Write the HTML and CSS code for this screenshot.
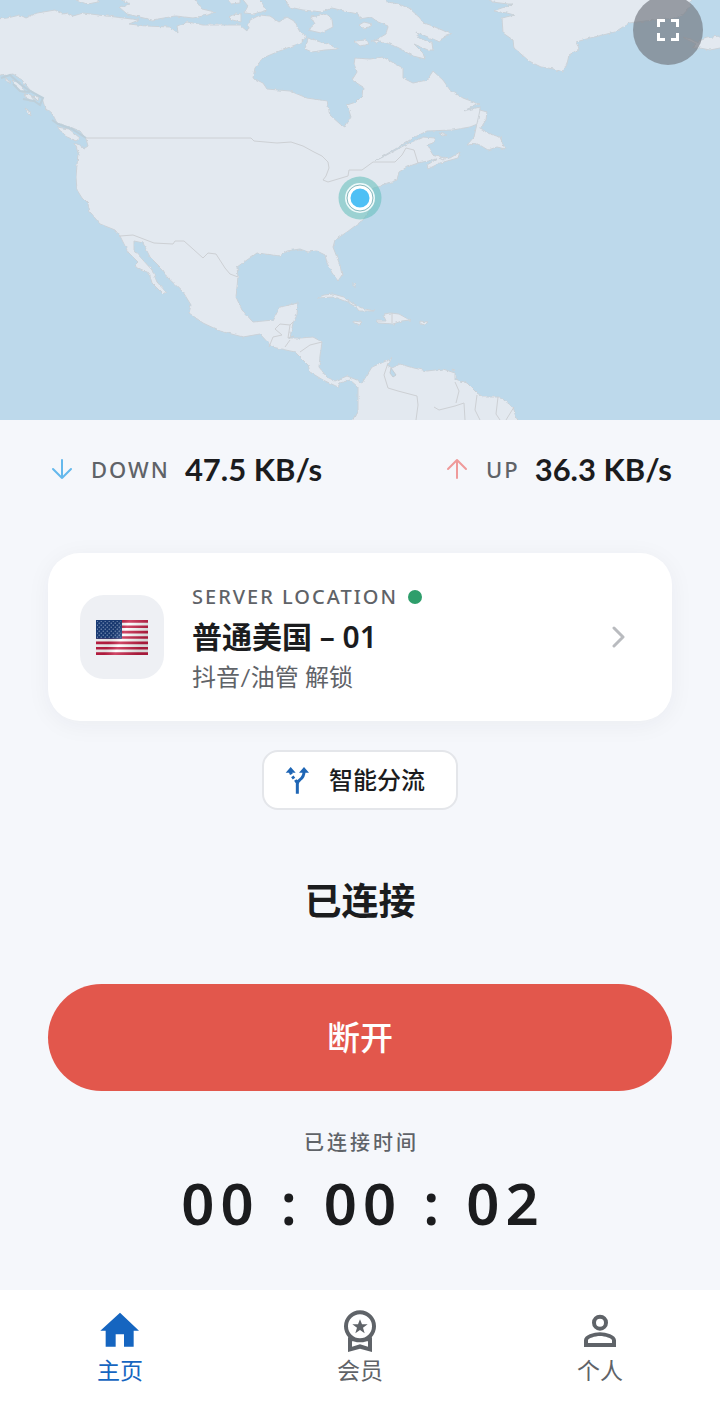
FILE: index.html
```html
<!DOCTYPE html>
<html lang="zh-CN">
<head>
<meta charset="utf-8">
<meta name="viewport" content="width=device-width, initial-scale=1">
<title>已连接</title>
<link rel="stylesheet" href="styles.css">
</head>
<body>
<section class="map">
<svg class="map-art" viewBox="0 0 720 420" preserveAspectRatio="xMidYMin slice" aria-hidden="true">
<defs><filter id="coast" x="0" y="0" width="100%" height="100%"><feTurbulence type="fractalNoise" baseFrequency="0.22" numOctaves="2" seed="4"/><feDisplacementMap in="SourceGraphic" scale="3" xChannelSelector="R" yChannelSelector="G"/></filter></defs>
<rect width="720" height="420" fill="#bdd9eb"/>
<g class="land" filter="url(#coast)">
<path d="M-5 19 7 18 20 15 26 18 37 13 55 10 62 14 68 13 73 16 83 13 107 16 124 18 139 20 129 24 147 26 170 27 178 33 177 26 187 22 203 25 240 25 247 31 250 20 260 15 270 16 279 22 287 17 294 21 300 32 307 37 298 44 290 47 277 52 263 58 255 68 253 78 263 83 267 89 290 91 307 98 327 101 330 115 340 124 345 127 351 117 347 105 356 102 362 96 363 87 352 80 357 72 354 64 355 58 370 59 383 57 392 62 403 68 403 78 413 83 427 80 433 71 443 80 450 90 463 98 479 104 463 111 480 107 480 123 470 127 453 130 427 131 413 138 397 148 375 161 383 157 407 144 423 137 435 138 433 143 427 145 433 155 440 157 450 158 460 152 458 158 440 163 428 169 427 165 437 159 418 163 407 167 399 172 397 180 383 185 372 189 374 204 363 220 347 232 335 240 333 247 340 265 342 275 338 281 332 273 327 263 325 255 317 251 308 252 300 249 287 251 280 256 257 253 247 260 237 267 238 277 236 297 242 310 253 322 273 320 280 307 298 303 297 315 293 323 290 338 300 338 313 337 322 342 320 357 319 367 327 377 335 381 347 376 357 380 362 383 372 367 393 358 387 365 392 368 400 364 410 367 427 371 443 369 455 373 455 379 467 383 477 393 483 397 500 397 513 407 519 425 350 425 358 410 358 387 350 380 340 383 338 387 323 380 310 372 308 365 300 357 295 352 272 347 260 334 243 337 220 331 203 323 189 313 191 305 183 292 167 277 163 270 150 257 143 243 134 241 134 250 143 260 152 270 157 282 166 292 163 294 152 283 149 273 134 266 138 262 128 252 120 236 115 230 100 224 90 212 88 204 82 198 77 190 76 177 78 153 75 143 85 148 88 146 86 139 80 131 70 127 57 123 53 115 45 108 42 98 30 90 22 80 13 74-5 77z"/>
<path d="M76 0 88 4 98 2 98-4H76zM113-4 130 4 119 7 127 14 152 20 176 16 193 18 208 15 215 12 202 9 195 0 193-4zM225-4 231 4 240 3V-4zM229 17 236 13 241 14 241 22 232 20zM240-4 248 6 244 13 254 14 267 10 262 3 255-4zM283-4 289 7 303 10 322 12 332 8 348 12 358 14 360 19 371 17 378 22 388 26 386 34 376 40 390 44 402 50 413 56 425 59 423 53 414 44 428 50 433 50 432 43 419 38 416 32 440 42 443 37 451 34 442 30 430 25 424 23 419 17 409 8 398 4 388 2 378-4zM311 17 325 14 332 19 333 27 321 33 308 30 315 24zM308 38 325 43 339 49 325 50 312 52 305 49zM359 25 364 22 372 24 370 27 362 28zM354 41 366 40 369 44 360 46zM371 41 380 40 377 44z"/>
<path d="M488-4 492 2 508 4 513 4 493 11 507 13 514 15 502 18 503 33 513 40 514 48 529 61 541 67 554 69 563 72 567 64 569 55 579 49 576 42 590 38 603 35 615 32 629 23 645 21 676 18 684 14 690 5 693-4zM480 110 487 112 486 120 480 129 490 134 500 137 505 149 497 147 488 150 478 144 467 145 474 137zM682 37 691 39 696 42 707 38 725 35V47L710 50 700 48 692 48 696 44z"/>
<path d="M57 127 69 129 80 138 76 141 65 136zM25 108 30 111 31 116 27 112zM12 80 20 83 26 93 19 91zM24 94 31 95 36 101 29 101zM3 77 11 82 7 82zM33 96 39 97 38 101z"/>
<path d="M317 298 324 295 333 294 344 297 352 303 365 309 375 311 359 311 356 307 347 302 334 297zM353 321 362 322 359 325 354 323zM376 321 386 321 383 314 391 313 399 314 410 320 402 321 393 324 378 323zM420 321 428 322 425 325 420 324zM353 283 356 286 353 286zM452 369 455 370 453 371zM439 158 447 157 443 160zM439 133 447 135 442 136z"/>
</g>
<g class="borders">
<path d="M86 138H251L254 141 277 143 291 142 303 146 314 152 322 156 328 162 329 168 326 176 323 180 328 182 348 176 349 170 362 170 373 162 395 162 402 155 406 148 414 150 418 163"/>
<path d="M120 236 133 235 154 243 173 244 175 241 184 241 193 249 203 258 208 253 216 254 225 268 230 274 238 277M269 347 273 337 282 335 275 329 280 324 290 325 288 338 294 336M285 347 290 340M300 352 310 345 322 342M290 325 293 322M388 363 384 375 388 388 398 391 417 396 418 405 416 420M434 407 439 410 455 406 464 403 465 420M455 382 459 391 456 403M477 395 475 410 480 420M498 397 496 414 500 420M514 407 506 420M392 313 392 323"/>
</g>
<path class="water" d="M391 368 396 375 393 377 390 373z"/>
<path class="inlets" d="M1 78 10 75 20 84 30 91 43 98 40 105 34 101 23 99M13 84 20 91 30 92M52 120 58 124 72 129 86 138"/>
<g><circle cx="360" cy="198" r="21.500" fill="#5ebdb8" opacity=".54"/><circle cx="360" cy="198" r="15" fill="#eefafa"/><circle cx="360" cy="198" r="11" fill="#4fc0f5" stroke="#fff" stroke-width="3"/><circle cx="360" cy="198" r="13" fill="none" stroke="#6ba6ad" stroke-width=".8"/></g>
</svg>
<button class="expand" type="button" aria-label="全屏"><svg viewBox="0 0 22 22" width="22" height="22"><path d="M1.500 8V1.500H8M14 1.500h6.500V8M20.500 14v6.500H14M8 20.500H1.500V14" fill="none" stroke="#fff" stroke-width="3"/></svg></button>
</section>
<main class="content">
<div class="stats">
<div class="stat"><svg class="arrow down" viewBox="0 0 28 28" aria-hidden="true"><path d="M14 5v18M5 14l9 9 9-9"/></svg><span class="stat-label">DOWN</span><strong class="stat-value">47.5 KB/s</strong></div>
<div class="stat"><svg class="arrow up" viewBox="0 0 28 28" aria-hidden="true"><path d="M14 23V5M5 14l9-9 9 9"/></svg><span class="stat-label">UP</span><strong class="stat-value">36.3 KB/s</strong></div>
</div>
<button class="server" type="button">
<span class="flag-box"><svg viewBox="0 0 52 35" width="52" height="35" aria-hidden="true">
<defs><linearGradient id="fold" x2="1" y2=".3"><stop offset="0" stop-color="#000" stop-opacity=".06"/><stop offset=".4" stop-color="#000" stop-opacity=".12"/><stop offset=".6" stop-color="#fff" stop-opacity=".18"/><stop offset="1" stop-color="#000" stop-opacity=".16"/></linearGradient>
<pattern id="stars" width="4" height="4" patternUnits="userSpaceOnUse"><circle cx="1.200" cy="1.200" r=".6" fill="#a9c0df"/><circle cx="3.200" cy="3.200" r=".6" fill="#a9c0df"/></pattern></defs>
<path fill="#fff" d="M0 0h52v35H0z"/><path d="M0 1.350h52M0 6.730h52M0 12.110h52M0 17.500h52M0 22.880h52M0 28.270h52M0 33.650h52" stroke="#c51f45" stroke-width="2.700"/><path fill="#1b3f7d" d="M0 0h26v18.800H0z"/><path fill="url(#stars)" d="M1 1h24v17H1z"/><path fill="url(#fold)" d="M0 0h52v35H0z"/></svg></span>
<span class="server-text"><span class="server-caption">SERVER LOCATION<i class="dot"></i></span><span class="server-name">普通美国 – 01</span><span class="server-note">抖音/油管 解锁</span></span>
<svg class="chevron" viewBox="0 0 14 24" width="14" height="24" aria-hidden="true"><path d="M2 3l9 9-9 9"/></svg>
</button>
<button class="chip" type="button"><svg viewBox="128 76 84 90" width="28" height="30" aria-hidden="true"><path d="M168 162v-29q0-8 8-13 12-9 12-24M147 95q1 5 3 9M153 110l5 7M162 121l5 7" fill="none" stroke="#1f66b5" stroke-width="9"/><path d="M148 82l15 17h-30zM188 82l15 17h-30z" fill="#1f66b5"/></svg>智能分流</button>
<h1 class="status">已连接</h1>
<button class="disconnect" type="button">断开</button>
<p class="time-label">已连接时间</p>
<time class="timer">00 : 00 : 02</time>
</main>
<nav class="tabs">
<a class="tab active" href="#home" aria-current="page"><svg viewBox="118 90 126 126" aria-hidden="true"><path d="M181 98l57 54h-16v48h-29v-37h-25v37h-30v-48h-16z"/></svg>主页</a>
<a class="tab" href="#member"><svg viewBox="837 90 126 126" aria-hidden="true"><path fill-rule="evenodd" d="M864 172v44l36-10 36 10v-44zM876 184v16l24-7 24 7v-16z"/><circle cx="900" cy="139" r="42" fill="#fff" stroke="currentColor" stroke-width="12"/><path d="M900 118l6 15h17l-14 10 5 17-14-10-14 10 5-17-14-10h17z"/></svg>会员</a>
<a class="tab" href="#profile"><svg viewBox="117 90 126 126" aria-hidden="true"><circle cx="180" cy="128" r="18" fill="none" stroke="currentColor" stroke-width="12"/><path fill-rule="evenodd" d="M132 201v-20c0-16 30-24 48-24s48 8 48 24v20zM144 189h72v-8c0-6-21-13-36-13s-36 7-36 13z"/></svg>个人</a>
</nav>
</body>
</html>
```
FILE: styles.css
```css
* { box-sizing: border-box; }
body {
  margin: 0;
  min-height: 100vh;
  display: flex;
  flex-direction: column;
  background: #f5f7fb;
  color: #1b1c1e;
  font-family: Lato, "Noto Sans CJK SC", sans-serif;
}
button { font: inherit; color: inherit; border: 0; padding: 0; cursor: pointer; }
svg { flex: none; }
.map { position: relative; aspect-ratio: 12 / 7; overflow: hidden; }
.map-art { display: block; width: 100%; height: 100%; }
.land { fill: #e3e9f0; stroke: #cbd2d8; stroke-width: 1; stroke-linejoin: round; }
.borders, .inlets { fill: none; stroke: #cdd0d4; stroke-width: 1; }
.inlets { stroke: #bdcfda; stroke-width: 2; }
.water { fill: #bdd9eb; stroke: #c6ced4; }
.expand {
  position: absolute;
  top: -5px;
  right: 17px;
  width: 70px;
  height: 70px;
  border-radius: 50%;
  display: grid;
  place-items: center;
  background: rgba(112, 117, 124, .65);
}
.content {
  flex: 1;
  display: flex;
  flex-direction: column;
  align-items: center;
  padding: 31px 48px 40px;
}
.stats { align-self: stretch; display: flex; justify-content: space-between; }
.stat { display: flex; align-items: center; gap: 15px; line-height: 36px; }
.arrow { width: 28px; height: 28px; fill: none; stroke-width: 2; stroke-linecap: round; stroke-linejoin: round; }
.down { stroke: #64b8ec; }
.up { stroke: #ef9a9a; }
.stat-label, .server-caption {
  font-family: "Noto Sans", sans-serif;
  font-weight: 500;
  letter-spacing: 2px;
  color: #5f6368;
}
.stat-label { font-size: 22px; }
.stat-value { font-size: 31px; font-weight: 700; }
.server {
  align-self: stretch;
  display: flex;
  align-items: center;
  gap: 28px;
  margin-top: 66px;
  padding: 24px 46px 24px 32px;
  border-radius: 32px;
  background: #fff;
  text-align: left;
  box-shadow: 0 4px 24px rgba(30, 40, 60, .05);
}
.flag-box { width: 84px; height: 84px; border-radius: 24px; display: grid; place-items: center; background: #eef0f4; }
.server-text { flex: 1; display: flex; flex-direction: column; line-height: 40px; }
.server-caption { display: flex; align-items: center; gap: 10px; font-size: 20px; }
.dot { width: 14px; height: 14px; border-radius: 50%; background: #2e9e6b; }
.server-name { font-family: "Noto Sans", "Noto Sans CJK SC", sans-serif; font-size: 30px; font-weight: 600; }
.server-note { font-size: 24px; color: #5f6368; }
.chevron { fill: none; stroke: #b9bbbf; stroke-width: 3; stroke-linecap: round; stroke-linejoin: round; }
.chip {
  display: flex;
  align-items: center;
  gap: 17px;
  margin-top: 29px;
  padding: 10px 31px 10px 20px;
  border: 2px solid #e4e6ea;
  border-radius: 16px;
  background: #fff;
  font-size: 24px;
  font-weight: 500;
  line-height: 36px;
}
.status { margin: 67px 0 0; font-size: 37px; font-weight: 700; line-height: 48px; }
.disconnect {
  align-self: stretch;
  margin-top: 59px;
  padding: 30px;
  border-radius: 54px;
  background: #e2574c;
  color: #fff;
  font-size: 33px;
  font-weight: 500;
  line-height: 47px;
}
.time-label { margin: 39px 0 0; padding-left: 3px; font-size: 20px; font-weight: 500; letter-spacing: 3px; line-height: 24px; color: #5f6368; }
.timer {
  margin-top: 13px;
  padding-left: 6px;
  font-family: "Noto Sans", sans-serif;
  font-size: 58px;
  font-weight: 600;
  letter-spacing: 6px;
  line-height: 72px;
}
.tabs { display: grid; grid-template-columns: repeat(3, 1fr); padding: 20px 0 16px; background: #fff; }
.tab { display: flex; flex-direction: column; align-items: center; gap: 2px; color: #5f6368; font-size: 23px; line-height: 33px; text-decoration: none; }
.tab svg { width: 42px; height: 42px; fill: currentColor; }
.active { color: #1565c0; }
```
